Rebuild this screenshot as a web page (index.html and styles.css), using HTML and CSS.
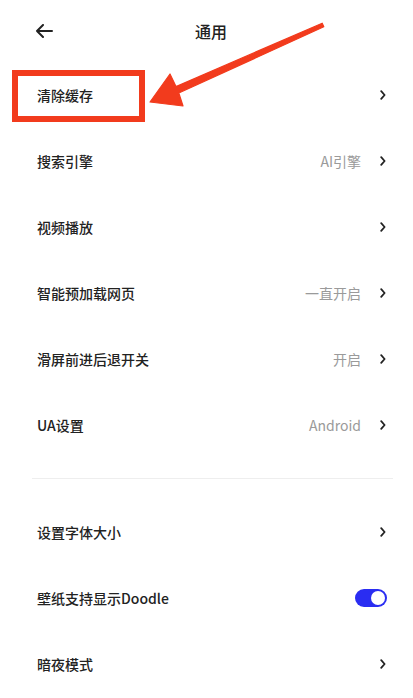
FILE: index.html
```html
<!DOCTYPE html>
<html lang="zh">
<head>
<meta charset="utf-8">
<link rel="stylesheet" href="styles.css">
</head>
<body>
<div class="page">
  <header class="header">
    <svg class="back" width="18" height="14" viewBox="0 0 18 14"><path d="M17 7H2M8 1L2 7L8 13" fill="none" stroke="#222" stroke-width="2" stroke-linecap="round" stroke-linejoin="round"/></svg>
    <div class="title">通用</div>
  </header>
  <div class="list">
    <div class="row"><span class="label">清除缓存</span><span class="right"><svg class="chev" width="6" height="10" viewBox="0 0 6 10"><path d="M1.2 1.2L4.6 5L1.2 8.8" fill="none" stroke="#222" stroke-width="1.8" stroke-linecap="round" stroke-linejoin="round"/></svg></span></div>
    <div class="row"><span class="label">搜索引擎</span><span class="right"><span class="value">AI引擎</span><svg class="chev" width="6" height="10" viewBox="0 0 6 10"><path d="M1.2 1.2L4.6 5L1.2 8.8" fill="none" stroke="#222" stroke-width="1.8" stroke-linecap="round" stroke-linejoin="round"/></svg></span></div>
    <div class="row"><span class="label">视频播放</span><span class="right"><svg class="chev" width="6" height="10" viewBox="0 0 6 10"><path d="M1.2 1.2L4.6 5L1.2 8.8" fill="none" stroke="#222" stroke-width="1.8" stroke-linecap="round" stroke-linejoin="round"/></svg></span></div>
    <div class="row"><span class="label">智能预加载网页</span><span class="right"><span class="value">一直开启</span><svg class="chev" width="6" height="10" viewBox="0 0 6 10"><path d="M1.2 1.2L4.6 5L1.2 8.8" fill="none" stroke="#222" stroke-width="1.8" stroke-linecap="round" stroke-linejoin="round"/></svg></span></div>
    <div class="row"><span class="label">滑屏前进后退开关</span><span class="right"><span class="value">开启</span><svg class="chev" width="6" height="10" viewBox="0 0 6 10"><path d="M1.2 1.2L4.6 5L1.2 8.8" fill="none" stroke="#222" stroke-width="1.8" stroke-linecap="round" stroke-linejoin="round"/></svg></span></div>
    <div class="row"><span class="label">UA设置</span><span class="right"><span class="value">Android</span><svg class="chev" width="6" height="10" viewBox="0 0 6 10"><path d="M1.2 1.2L4.6 5L1.2 8.8" fill="none" stroke="#222" stroke-width="1.8" stroke-linecap="round" stroke-linejoin="round"/></svg></span></div>
  </div>
  <div class="divider"></div>
  <div class="list">
    <div class="row"><span class="label">设置字体大小</span><span class="right"><svg class="chev" width="6" height="10" viewBox="0 0 6 10"><path d="M1.2 1.2L4.6 5L1.2 8.8" fill="none" stroke="#222" stroke-width="1.8" stroke-linecap="round" stroke-linejoin="round"/></svg></span></div>
    <div class="row"><span class="label">壁纸支持显示Doodle</span><span class="right"><span class="toggle"><span class="knob"></span></span></span></div>
    <div class="row"><span class="label">暗夜模式</span><span class="right"><svg class="chev" width="6" height="10" viewBox="0 0 6 10"><path d="M1.2 1.2L4.6 5L1.2 8.8" fill="none" stroke="#222" stroke-width="1.8" stroke-linecap="round" stroke-linejoin="round"/></svg></span></div>
  </div>
  <div class="highlight"></div>
  <svg class="pointer" width="413" height="130" viewBox="0 0 413 130"><polygon points="150,102 170,74 176,86.6 322.2,23.2 323.8,26.8 178.8,93 183,106" fill="#f23b1d" stroke="#f23b1d" stroke-width="1.2" stroke-linejoin="round"/></svg>
</div>
</body>
</html>
```

FILE: styles.css
```css
* { box-sizing: border-box; }
html, body { margin: 0; padding: 0; background: #fff; }
body {
  font-family: "Noto Sans CJK SC", "Noto Sans", sans-serif;
  color: #222;
}
.page {
  position: relative;
  width: 413px;
  height: 698px;
  overflow: hidden;
}
.header {
  height: 62px;
  display: flex;
  align-items: center;
  padding-left: 35px;
}
.back { display: block; }
.title {
  margin-left: 142px;
  font-size: 16px;
  font-weight: 500;
  color: #222;
}
.list { display: flex; flex-direction: column; }
.row {
  height: 66px;
  display: flex;
  align-items: center;
  justify-content: space-between;
  padding: 0 27px 0 37px;
}
.label {
  font-size: 14px;
  font-weight: 500;
  color: #222;
}
.right {
  display: flex;
  align-items: center;
}
.value {
  font-size: 14px;
  color: #9a9a9a;
  margin-right: 19px;
}
.chev { display: block; }
.toggle {
  width: 32px;
  height: 18px;
  border-radius: 9px;
  background: #2a2df2;
  display: flex;
  align-items: center;
  justify-content: flex-end;
  padding-right: 2px;
  margin-right: -1px;
}
.knob {
  width: 14px;
  height: 14px;
  border-radius: 50%;
  background: #fff;
}
.divider {
  height: 1px;
  background: #eeeeee;
  margin: 20px 20px 20px 32px;
}
.highlight {
  position: absolute;
  left: 12px;
  top: 70px;
  width: 133px;
  height: 52px;
  border: 6px solid #f23b1d;
}
.pointer {
  position: absolute;
  left: 0;
  top: 0;
}
```
